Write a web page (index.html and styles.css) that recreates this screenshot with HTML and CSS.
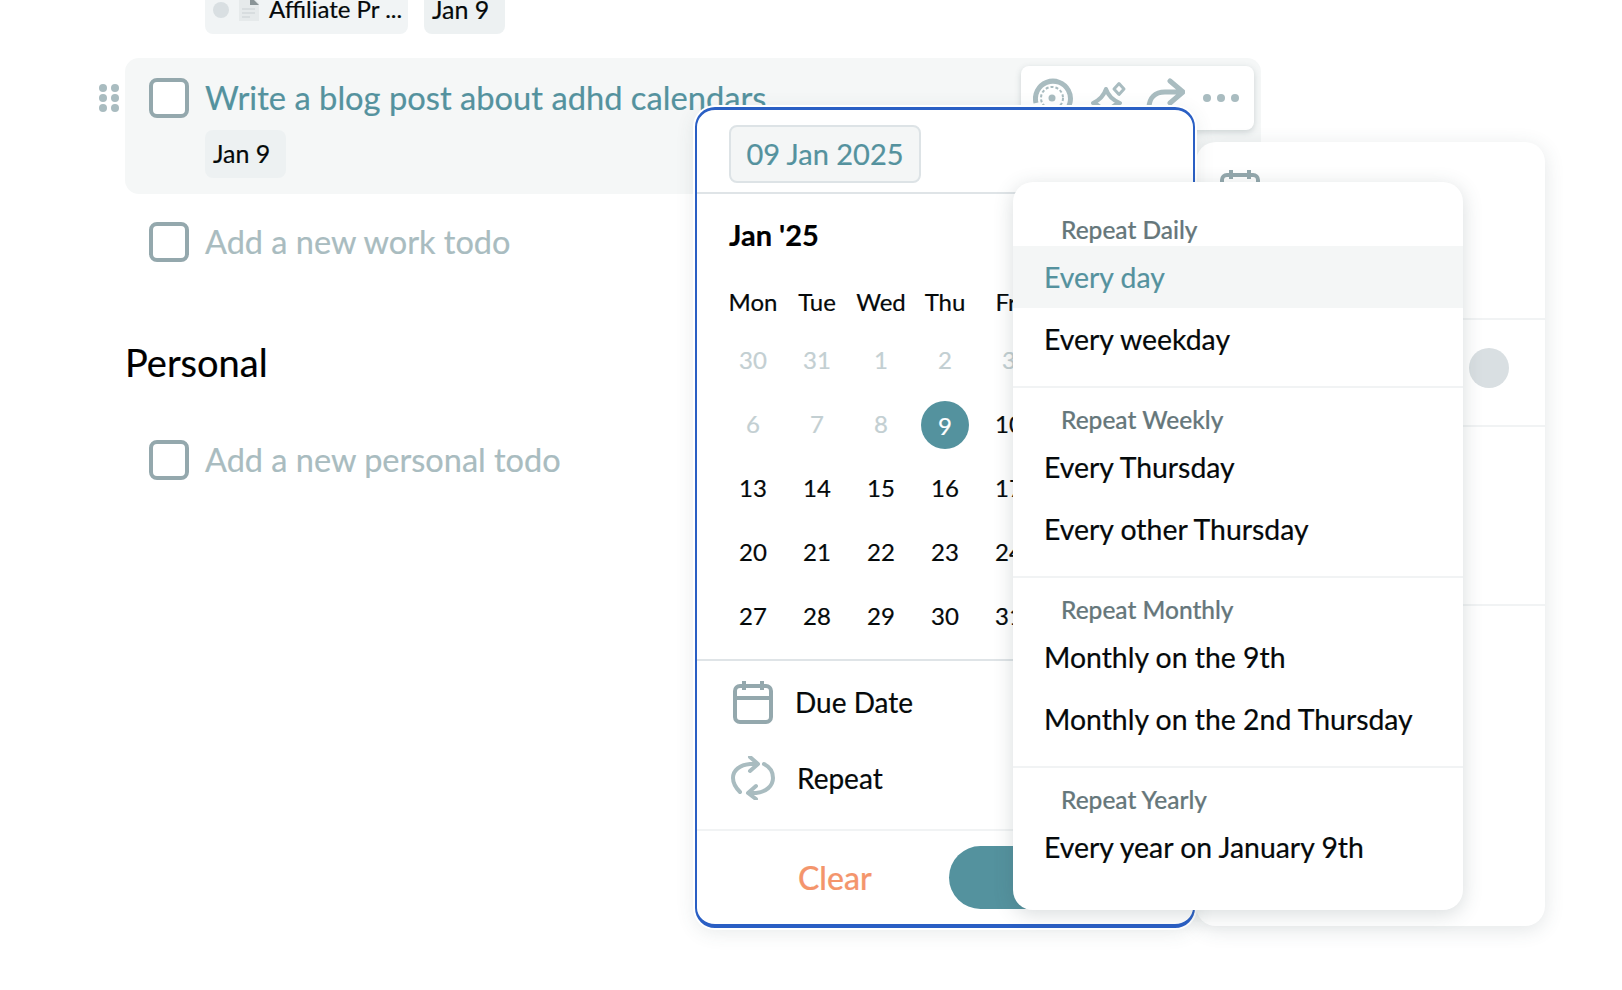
FILE: index.html
```html
<!DOCTYPE html>
<html>
<head>
    <title>Todos</title>
    <link rel="stylesheet" href="styles.css">
</head>
<body>
    <main class="list">
        <div class="chips chips-top">
            <span class="chip chip-project">
                <span class="dot"></span>
                <svg class="doc" viewBox="0 0 21 26"><path d="M0 0h13l7 7v18H0z" fill="#e6eaeb"/><path d="M11 0l9 9h-9z" fill="#8a9497"/><path d="M3 13h13M3 17h13M3 21h8" stroke="#d3d9db" stroke-width="1.500"/></svg>
                Affiliate Pr ...
            </span>
            <span class="chip">Jan 9</span>
        </div>

        <div class="todo">
            <svg class="grip" viewBox="0 0 20 28"><g fill="#a9bcc0"><circle cx="4" cy="4" r="4"/><circle cx="16" cy="4" r="4"/><circle cx="4" cy="14" r="4"/><circle cx="16" cy="14" r="4"/><circle cx="4" cy="24" r="4"/><circle cx="16" cy="24" r="4"/></g></svg>
            <span class="check"></span>
            <div class="todo-body">
                <div class="todo-title">Write a blog post about adhd calendars</div>
                <div class="chips"><span class="chip">Jan 9</span></div>
            </div>
            <div class="toolbar">
                <svg class="tool" viewBox="0 0 40 40" fill="none" stroke="#a9bcc0" stroke-width="5"><path d="M3 25A17.500 17.500 0 1 1 30 35"/><circle cx="19" cy="20" r="11" stroke-width="2" stroke-dasharray="3 2"/><circle cx="19" cy="20" r="3.500" fill="#a9bcc0" stroke="none"/></svg>
                <svg class="tool" viewBox="0 0 40 40" fill="none" stroke="#a9bcc0" stroke-width="4" stroke-linejoin="round"><path d="M17 11c2 6 6 11 14 14-8 2-12 6-14 14-2-8-6-12-13-14 7-3 11-8 13-14z"/><path d="M30 5.500l5 5.500-5 5.500-5-5.500z" stroke-width="3"/></svg>
                <svg class="tool" viewBox="0 0 40 40" fill="none" stroke="#a9bcc0" stroke-width="5" stroke-linecap="round" stroke-linejoin="round"><path d="M25 3l13 11-13 11M37 14H20C10 14 4 20 4 30v10"/></svg>
                <svg class="tool" viewBox="0 0 40 40" fill="#a9bcc0"><circle cx="6" cy="20" r="4"/><circle cx="20" cy="20" r="4"/><circle cx="34" cy="20" r="4"/></svg>
            </div>
        </div>

        <div class="add-row add-work">
            <span class="check"></span>
            <span class="add-text">Add a new work todo</span>
        </div>

        <h2 class="section-title">Personal</h2>

        <div class="add-row add-personal">
            <span class="check"></span>
            <span class="add-text">Add a new personal todo</span>
        </div>
    </main>

    <aside class="side-panel">
        <div class="side-top">
            <svg class="icon-cal" viewBox="0 0 40 43" fill="none" stroke="#94a8ad" stroke-width="4"><rect x="2" y="5" width="36" height="36" rx="5"/><path d="M2 17h36M11 0v9M29 0v9"/></svg>
        </div>
        <div class="side-mid"><span class="side-circle"></span></div>
        <div class="side-low"></div>
    </aside>

    <section class="picker">
        <div class="picker-head">
            <div class="date-input">09 Jan 2025</div>
        </div>
        <div class="cal">
            <div class="cal-month">Jan '25</div>
            <div class="cal-grid cal-week">
                <span>Mon</span><span>Tue</span><span>Wed</span><span>Thu</span><span>Fri</span>
            </div>
            <div class="cal-grid cal-days">
                <span class="day muted">30</span><span class="day muted">31</span><span class="day muted">1</span><span class="day muted">2</span><span class="day muted">3</span>
                <span class="day muted">6</span><span class="day muted">7</span><span class="day muted">8</span><span class="selected">9</span><span class="day">10</span>
                <span class="day">13</span><span class="day">14</span><span class="day">15</span><span class="day">16</span><span class="day">17</span>
                <span class="day">20</span><span class="day">21</span><span class="day">22</span><span class="day">23</span><span class="day">24</span>
                <span class="day">27</span><span class="day">28</span><span class="day">29</span><span class="day">30</span><span class="day">31</span>
            </div>
        </div>
        <div class="picker-opts">
            <div class="opt">
                <svg class="icon-cal" viewBox="0 0 40 43" fill="none" stroke="#94a8ad" stroke-width="4"><rect x="2" y="5" width="36" height="36" rx="5"/><path d="M2 17h36M11 0v9M29 0v9"/></svg>
                <span>Due Date</span>
            </div>
            <div class="opt opt-repeat">
                <svg class="icon-repeat" viewBox="0 0 44 44" fill="none" stroke="#a9bcc0" stroke-width="4" stroke-linecap="round" stroke-linejoin="round"><path d="M19 1l8 7-8 7M26 8h-7C9 9 2 14 2 22c0 6 3 10 7 14"/><path d="M25 30l-8 7 8 6M18 37h7c10-1 17-7 17-15 0-6-3-11-9-14"/></svg>
                <span>Repeat</span>
            </div>
        </div>
        <div class="picker-foot">
            <span class="clear">Clear</span>
            <span class="save"></span>
        </div>
    </section>

    <nav class="repeat-menu">
        <div class="rep-group rep-first">
            <div class="rep-head">Repeat Daily</div>
            <div class="rep-item active">Every day</div>
            <div class="rep-item">Every weekday</div>
        </div>
        <div class="rep-group">
            <div class="rep-head">Repeat Weekly</div>
            <div class="rep-item">Every Thursday</div>
            <div class="rep-item">Every other Thursday</div>
        </div>
        <div class="rep-group">
            <div class="rep-head">Repeat Monthly</div>
            <div class="rep-item">Monthly on the 9th</div>
            <div class="rep-item">Monthly on the 2nd Thursday</div>
        </div>
        <div class="rep-group rep-last">
            <div class="rep-head">Repeat Yearly</div>
            <div class="rep-item">Every year on January 9th</div>
        </div>
    </nav>
</body>
</html>
```

FILE: styles.css
```css
* { box-sizing: border-box; }
html, body { margin: 0; height: 990px; overflow: hidden; background: #fff; }
body { font-family: Lato, "Noto Sans", sans-serif; color: #05090a; position: relative; -webkit-text-stroke: 0.2px; }

.list { width: 1261px; padding-left: 125px; }

.chips { display: flex; gap: 16px; }
.chips-top { margin: -14px 0 24px 80px; }
.chip { display: flex; align-items: center; width: 81px; height: 48px; padding: 0 0 3px 8px; background: #edf1f2; border-radius: 8px; font-size: 25px; }
.chip-project { width: 203px; background: #f1f4f5; white-space: nowrap; font-size: 24px; }
.dot { width: 16px; height: 16px; border-radius: 50%; background: #d9dfe2; margin: 3px 10px 0 0; }
.doc { width: 21px; height: 26px; margin-right: 9px; }

.todo { position: relative; display: flex; gap: 16px; height: 136px; padding: 20px 0 0 24px; background: #f5f7f7; border-radius: 14px; }
.grip { position: absolute; left: -26px; top: 26px; width: 20px; height: 28px; }
.check { flex: none; display: block; width: 40px; height: 40px; background: #fff; border: 4px solid #94a8ad; border-radius: 8px; }
.todo-title { font-size: 32.7px; line-height: 40px; color: #54929e; margin-bottom: 12px; white-space: nowrap; }

.toolbar { position: absolute; right: 7px; top: 8px; display: flex; align-items: center; gap: 16px; width: 233px; height: 64px; padding-left: 12px; background: #fff; border-radius: 8px; box-shadow: 0 2px 6px rgba(60, 80, 85, 0.22); }
.tool { width: 40px; height: 40px; }

.add-row { display: flex; align-items: center; gap: 16px; padding-left: 24px; }
.add-work { margin-top: 28px; }
.add-personal { margin-top: 54px; }
.add-text { font-size: 32.5px; line-height: 40px; color: #a9bcc0; }
.section-title { margin: 76px 0 0 0; font-size: 38px; line-height: 48px; font-weight: 400; color: #000; }

.side-panel { position: absolute; left: 1196px; top: 142px; width: 349px; height: 784px; background: #fff; border-radius: 20px; box-shadow: 0 4px 20px rgba(60, 80, 85, 0.14); }
.side-top { height: 178px; padding: 28px 24px; border-bottom: 2px solid #f1f3f4; }
.side-mid { display: flex; justify-content: flex-end; height: 107px; padding: 28px 36px 0 0; border-bottom: 2px solid #f1f3f4; }
.side-circle { width: 40px; height: 40px; border-radius: 50%; background: #d9dfe2; }
.side-low { height: 179px; border-bottom: 2px solid #f1f3f4; }
.icon-cal { display: block; width: 40px; height: 43px; }
.icon-repeat { display: block; width: 44px; height: 44px; margin-left: -2px; }

.picker { position: absolute; left: 695px; top: 107px; width: 500px; height: 821px; background: #fff; border: solid #2a5fc4; border-width: 3px 2px 4px; border-radius: 20px; box-shadow: 0 0 0 2px #fff, 0 4px 20px rgba(60, 80, 85, 0.12); overflow: hidden; }
.picker-head { height: 84px; padding: 15px 0 0 32px; border-bottom: 2px solid #dfe4e7; }
.date-input { display: flex; align-items: center; justify-content: center; width: 192px; height: 58px; padding-bottom: 2px; background: #f4f6f6; border: 2px solid #dde3e6; border-radius: 8px; font-size: 29px; color: #54929e; }

.cal { height: 467px; padding: 23px 0 0 24px; border-bottom: 2px solid #dfe4e7; }
.cal-month { margin-left: 8px; font-size: 29px; line-height: 36px; font-weight: 700; color: #000; }
.cal-grid { display: grid; grid-template-columns: repeat(5, 64px); justify-items: center; align-items: center; text-align: center; font-size: 24px; }
.cal-week { margin-top: 28px; height: 40px; }
.cal-days { margin-top: 8px; grid-auto-rows: 64px; }
.day { padding-bottom: 3px; }
.muted { color: #c3cfd2; }
.selected { display: flex; align-items: center; justify-content: center; width: 48px; height: 48px; border-radius: 50%; background: #54929e; color: #fff; }

.picker-opts { height: 170px; padding-top: 3px; border-bottom: 2px solid #f1f3f4; }
.opt { display: flex; align-items: center; gap: 22px; height: 76px; padding-left: 36px; font-size: 28px; }
.picker-foot { display: flex; align-items: center; gap: 77px; padding: 15px 0 0 101px; }
.clear { font-size: 32px; font-weight: 500; color: #f4956c; }
.save { width: 220px; height: 63px; border-radius: 32px; background: #54929e; }

.repeat-menu { position: absolute; left: 1013px; top: 182px; width: 450px; height: 728px; background: #fff; border-radius: 20px; box-shadow: 0 4px 20px rgba(60, 80, 85, 0.2); overflow: hidden; }
.rep-group { padding: 15px 0 16px; border-bottom: 2px solid #f1f3f4; }
.rep-first { padding: 31px 0 16px; }
.rep-last { border-bottom: none; }
.rep-head { height: 33px; line-height: 33px; padding-left: 48px; font-size: 24.5px; font-weight: 500; color: #66777b; }
.rep-item { height: 62px; line-height: 62px; padding-left: 31px; font-size: 28.4px; }
.rep-item.active { background: #f4f6f6; color: #54929e; }
```
